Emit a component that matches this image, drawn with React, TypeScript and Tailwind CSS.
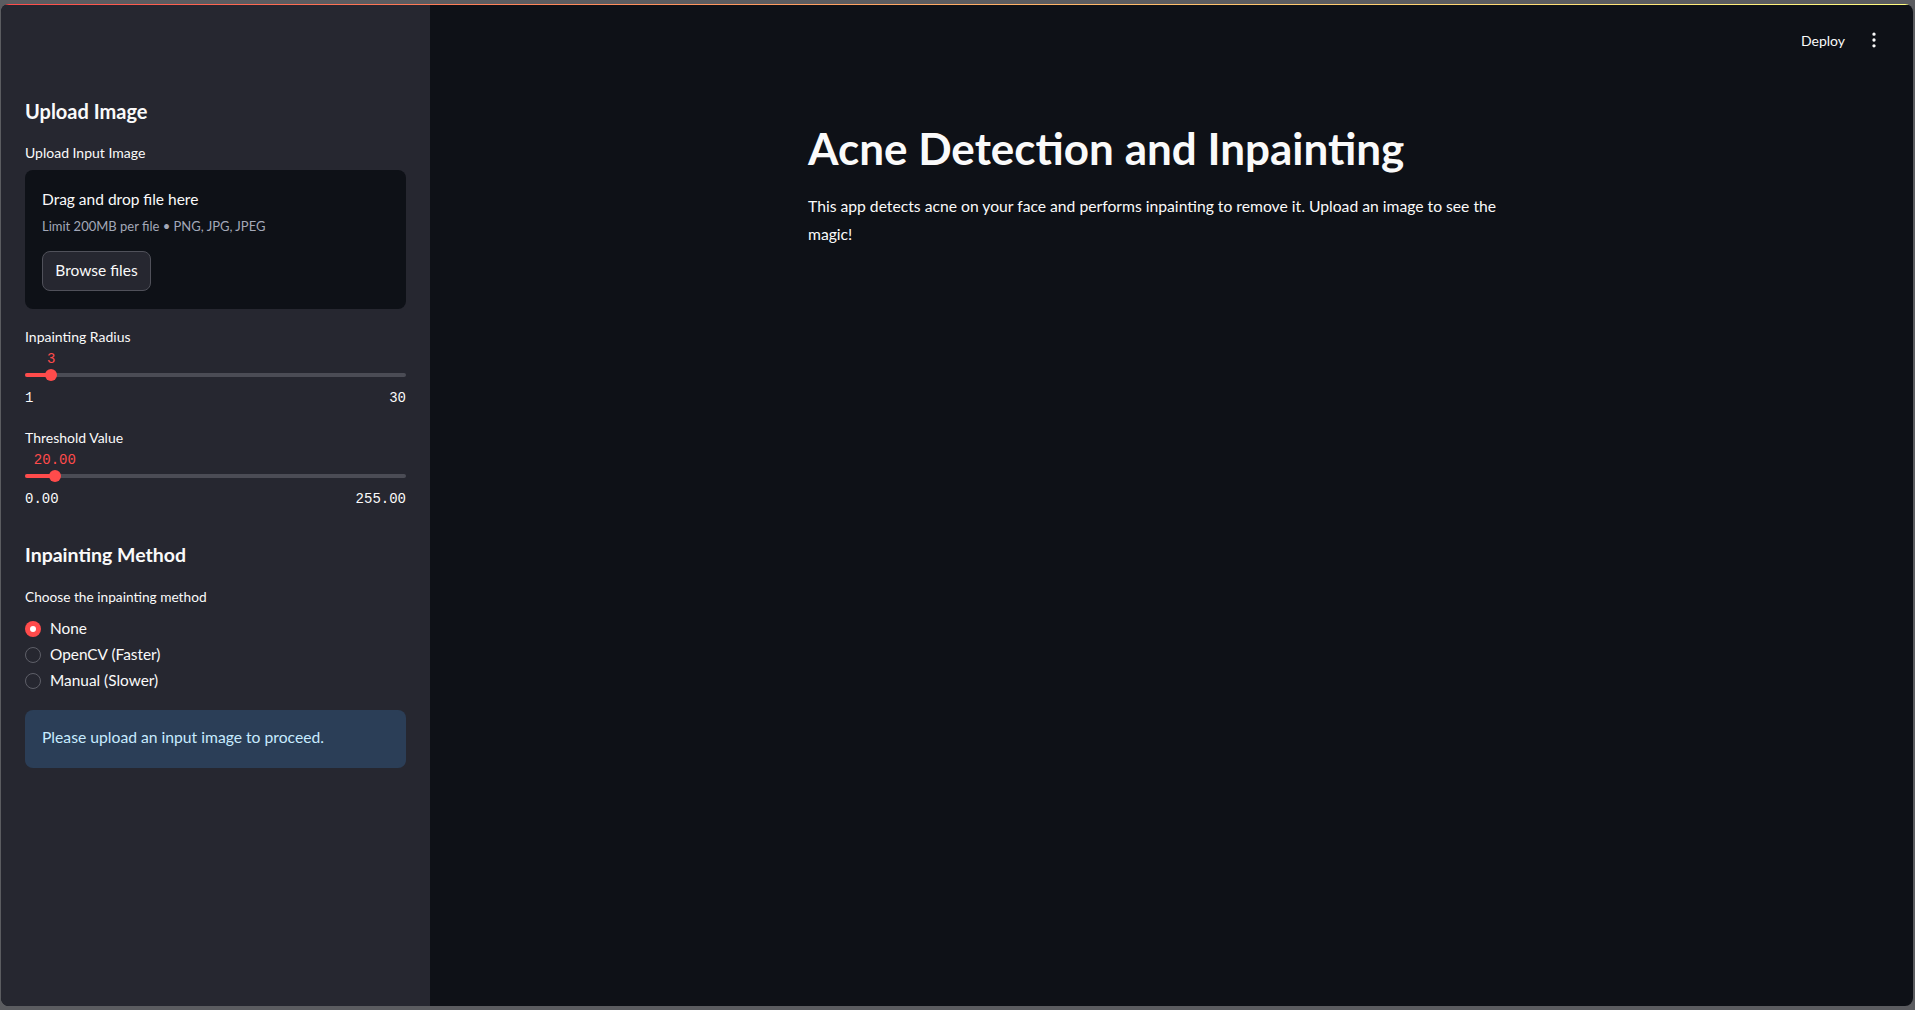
import { EllipsisVertical } from 'lucide-react';

const sans = "font-['Lato',sans-serif]";
const mono = "font-['Liberation_Mono',monospace]";

type SliderProps = { label: string; value: number; min: number; max: number; fmt: (n: number) => string };

function Slider({ label, value, min, max, fmt }: SliderProps) {
    const pct = ((value - min) / (max - min)) * 100;
    return (
        <div className="flex flex-col">
            <div className="text-[14px] leading-[20px] text-[#fafafa]">{label}</div>
            <div className="relative mt-[4px] h-[16px]">
                <span className={`absolute top-0 -translate-x-1/2 text-[14px] leading-[16px] text-[#ff4b4b] ${mono}`} style={{ left: `${pct}%` }}>
                    {fmt(value)}
                </span>
            </div>
            <div className="relative h-[16px] flex items-center">
                <div className="h-[4px] w-full rounded-full bg-[#4b4c55]" />
                <div className="absolute left-0 h-[4px] rounded-full bg-[#ff4b4b]" style={{ width: `${pct}%` }} />
                <div className="absolute h-[12px] w-[12px] -translate-x-1/2 rounded-full bg-[#ff4b4b]" style={{ left: `${pct}%` }} />
            </div>
            <div className={`mt-[7px] flex justify-between text-[14px] leading-[16px] text-[#fafafa] ${mono}`}>
                <span>{fmt(min)}</span>
                <span>{fmt(max)}</span>
            </div>
        </div>
    );
}

function Radio({ label, checked }: { label: string; checked?: boolean }) {
    return (
        <label className="flex h-[26px] items-center gap-[9px]">
            {checked ? (
                <span className="flex h-[16px] w-[16px] items-center justify-center rounded-full bg-[#ff4b4b]">
                    <span className="h-[6px] w-[6px] rounded-full bg-white" />
                </span>
            ) : (
                <span className="h-[16px] w-[16px] rounded-full border border-[#5e5f68]" />
            )}
            <span className="text-[15.4px] text-[#fafafa]">{label}</span>
        </label>
    );
}

export default function App() {
    return (
        <div className={`h-[1010px] w-[1915px] bg-[#5b5c60] pt-[4px] pb-[4px] pl-[1px] pr-[2px] ${sans}`}>
            <div className="flex h-full flex-col overflow-hidden rounded-lg bg-[#0e1117]">
                <div className="h-px bg-gradient-to-r from-[#ff4b4b] to-[#fffd80]" />
                <div className="flex flex-1">
                    {/* sidebar */}
                    <aside className="flex w-[429px] flex-col bg-[#262730] px-[24px] pt-[94px]">
                        <h2 className="text-[20px] font-bold leading-[24px] text-[#fafafa]">Upload Image</h2>
                        <div className="mt-[20px] text-[14px] leading-[20px] text-[#fafafa]">Upload Input Image</div>
                        <div className="mt-[7px] rounded-lg bg-[#0e1117] px-[17px] pt-[17px] pb-[18px]">
                            <p className="text-[15.5px] leading-[24px] text-[#fafafa]">Drag and drop file here</p>
                            <p className="mt-[6px] text-[13px] leading-[18px] text-[#a3a8b8]">Limit 200MB per file • PNG, JPG, JPEG</p>
                            <button className="mt-[16px] flex h-[40px] w-[109px] items-center justify-center rounded-lg border border-[#50515a] bg-[#262730] text-[15.5px] text-[#fafafa]">
                                Browse files
                            </button>
                        </div>

                        <div className="mt-[18px]">
                            <Slider label="Inpainting Radius" value={3} min={1} max={30} fmt={(n) => String(n)} />
                        </div>
                        <div className="mt-[22px]">
                            <Slider label="Threshold Value" value={20} min={0} max={255} fmt={(n) => n.toFixed(2)} />
                        </div>

                        <h2 className="mt-[36px] text-[19.5px] font-bold leading-[24px] text-[#fafafa]">Inpainting Method</h2>
                        <div className="mt-[20px] text-[13.7px] leading-[20px] text-[#fafafa]">Choose the inpainting method</div>
                        <div className="mt-[9px] flex flex-col">
                            <Radio label="None" checked />
                            <Radio label="OpenCV (Faster)" />
                            <Radio label="Manual (Slower)" />
                        </div>

                        <div className="mt-[16px] rounded-lg bg-[#2b3e57] px-[17px] pt-[15px] pb-[19px] text-[15.7px] leading-[24px] text-[#c7ebff]">
                            Please upload an input image to proceed.
                        </div>
                    </aside>

                    {/* main */}
                    <main className="relative flex-1">
                        <div className="absolute right-0 top-0 flex h-[70px] items-center gap-[19px] pr-[29px]">
                            <span className="text-[14px] text-[#fafafa]">Deploy</span>
                            <EllipsisVertical className="h-[20px] w-[20px] text-[#fafafa]" strokeWidth={2} />
                        </div>
                        <div className="mx-auto w-[727px] pt-[117px]">
                            <h1 className="text-[44px] font-bold leading-[52px] text-[#fafafa]">Acne Detection and Inpainting</h1>
                            <p className="mt-[18px] text-[15.7px] leading-[28px] text-[#fafafa]">
                                This app detects acne on your face and performs inpainting to remove it. Upload an image to see the magic!
                            </p>
                        </div>
                    </main>
                </div>
            </div>
        </div>
    );
}
